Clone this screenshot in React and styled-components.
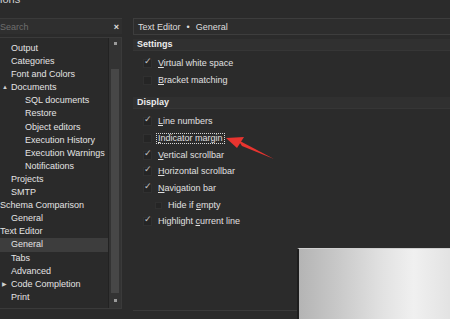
import React from "react";
import styled, { createGlobalStyle } from "styled-components";

const GlobalStyle = createGlobalStyle`
  html, body { margin: 0; padding: 0; background: #2b2b2b; }
  body { font-family: "Liberation Sans", Arial, sans-serif; }
`;

const Window = styled.div`
  position: relative;
  width: 450px;
  height: 319px;
  overflow: hidden;
  background: #2b2b2b;
  color: #dcdcdc;
  font-size: 9px;
`;

const TitleStrip = styled.div`
  height: 18px;
  overflow: hidden;
  color: #d0d0d0;
  font-size: 11px;
  line-height: 11px;
`;

const TitleText = styled.div`
  margin-top: -6px;
`;

const Main = styled.div`
  display: grid;
  grid-template-columns: 122px 1fr;
  column-gap: 11px;
  height: 291px;
`;

const LeftColumn = styled.div`
  display: flex;
  flex-direction: column;
  gap: 3px;
`;

const SearchBox = styled.div`
  height: 15px;
  display: flex;
  align-items: center;
  justify-content: space-between;
  border-top: 1px solid #3a3a3a;
  background: #2f2f2f;
  padding-right: 3px;
  color: #6e6e6e;
`;

const ClearGlyph = styled.span`
  color: #e0e0e0;
  font-size: 9px;
  font-weight: bold;
`;

const TreePanel = styled.div`
  height: 270px;
  display: flex;
  border-top: 1px solid #3a3a3a;
  border-bottom: 1px solid #3a3a3a;
  border-right: 1px solid #3a3a3a;
  background: #2a2a2a;
`;

const TreeList = styled.div`
  flex: 1;
  padding-top: 4px;
  border-right: 1px solid #222;
`;

const TreeRow = styled.div`
  position: relative;
  height: 13.1px;
  line-height: 13.1px;
  padding-left: ${(p) => p.$indent}px;
  white-space: nowrap;
  color: #e4e4e4;
  background: ${(p) => (p.$selected ? "#3d3d3d" : "transparent")};
`;

const Expander = styled.span`
  position: absolute;
  left: 2px;
  top: 0;
  font-size: 6px;
  color: #cfcfcf;
`;

const ScrollBar = styled.div`
  width: 12px;
  display: flex;
  flex-direction: column;
  align-items: center;
  background: #333333;
  padding: 4px 0 6px;
`;

const ScrollArrow = styled.div`
  width: 3px;
  height: 3px;
  background: #9a9a9a;
`;

const ScrollThumb = styled.div`
  width: 8px;
  flex: 1;
  margin: 24px 0 6px;
  background: #474747;
`;

const RightColumn = styled.div`
  display: flex;
  flex-direction: column;
`;

const Breadcrumb = styled.div`
  height: 15px;
  display: flex;
  align-items: center;
  gap: 6px;
  padding-left: 4px;
  border-top: 1px solid #3d3d3d;
  border-bottom: 1px solid #3d3d3d;
  border-left: 1px solid #3d3d3d;
  background: #2d2d2d;
  color: #dedede;
`;

const Content = styled.div`
  height: 271px;
  border-bottom: 1px solid #3a3a3a;
  padding-top: 4px;
`;

const SectionHeader = styled.div`
  height: 11px;
  line-height: 11px;
  padding-left: 4px;
  font-weight: bold;
  color: #ececec;
  background: #303030;
  border-bottom: 1px solid #363636;
  margin-bottom: 4px;
`;

const Section = styled.div`
  margin-bottom: ${(p) => p.$gap || 0}px;
`;

const OptionRow = styled.div`
  height: 16.7px;
  display: flex;
  align-items: center;
  gap: 4px;
  padding-left: ${(p) => (p.$nested ? 22 : 10)}px;
`;

const Box = styled.span`
  position: relative;
  width: ${(p) => (p.$small ? 5 : 7)}px;
  height: ${(p) => (p.$small ? 5 : 7)}px;
  background: #252525;
  border: 1px solid #303030;
  flex: none;
`;

const Tick = styled.span`
  position: absolute;
  left: 0px;
  top: -4px;
  font-size: 9px;
  color: #c4c4c4;
`;

const Label = styled.span`
  color: #e0e0e0;
  padding: 0 1px;
  border: 1px dotted ${(p) => (p.$focused ? "#d8d8d8" : "transparent")};
  line-height: 9px;
`;

const Key = styled.span`
  text-decoration: underline;
`;

const Watermark = styled.div`
  position: absolute;
  left: 297px;
  top: 248px;
  width: 153px;
  height: 71px;
  border-left: 2px solid #1e1e1e;
  border-top: 1px solid #d0d0d0;
  background: linear-gradient(90deg, #b4b4b4 0%, #c8c8c8 25%, #e2e2e2 55%, #f0f0f0 75%, #e2e2e2 100%);
`;

const ArrowLayer = styled.svg`
  position: absolute;
  left: 0;
  top: 0;
  pointer-events: none;
`;

const tree = [
  { t: "Output", i: 11 },
  { t: "Categories", i: 11 },
  { t: "Font and Colors", i: 11 },
  { t: "Documents", i: 11, exp: "▲" },
  { t: "SQL documents", i: 25 },
  { t: "Restore", i: 25 },
  { t: "Object editors", i: 25 },
  { t: "Execution History", i: 25 },
  { t: "Execution Warnings", i: 25 },
  { t: "Notifications", i: 25 },
  { t: "Projects", i: 11 },
  { t: "SMTP", i: 11 },
  { t: "Schema Comparison", i: 0 },
  { t: "General", i: 11 },
  { t: "Text Editor", i: 0 },
  { t: "General", i: 11, sel: true },
  { t: "Tabs", i: 11 },
  { t: "Advanced", i: 11 },
  { t: "Code Completion", i: 11, exp: "▶" },
  { t: "Print", i: 11 },
];

const Option = ({ checked, nested, focused, children }) => (
  <OptionRow $nested={nested}>
    <Box $small={nested}>{checked && <Tick>✓</Tick>}</Box>
    <Label $focused={focused}>{children}</Label>
  </OptionRow>
);

export default function App() {
  return (
    <Window>
      <GlobalStyle />
      <TitleStrip>
        <TitleText>ions</TitleText>
      </TitleStrip>
      <Main>
        <LeftColumn>
          <SearchBox>
            <span>Search</span>
            <ClearGlyph>×</ClearGlyph>
          </SearchBox>
          <TreePanel>
            <TreeList>
              {tree.map((n, k) => (
                <TreeRow key={k} $indent={n.i} $selected={n.sel}>
                  {n.exp && <Expander>{n.exp}</Expander>}
                  {n.t}
                </TreeRow>
              ))}
            </TreeList>
            <ScrollBar>
              <ScrollArrow />
              <ScrollThumb />
              <ScrollArrow />
            </ScrollBar>
          </TreePanel>
        </LeftColumn>
        <RightColumn>
          <Breadcrumb>
            <span>Text Editor</span>
            <span>•</span>
            <span>General</span>
          </Breadcrumb>
          <Content>
            <Section $gap={9}>
              <SectionHeader>Settings</SectionHeader>
              <Option checked>
                <Key>V</Key>irtual white space
              </Option>
              <Option>
                <Key>B</Key>racket matching
              </Option>
            </Section>
            <Section>
              <SectionHeader>Display</SectionHeader>
              <Option checked>
                <Key>L</Key>ine numbers
              </Option>
              <Option focused>
                <Key>I</Key>ndicator margin
              </Option>
              <Option checked>
                <Key>V</Key>ertical scrollbar
              </Option>
              <Option checked>
                <Key>H</Key>orizontal scrollbar
              </Option>
              <Option checked>
                <Key>N</Key>avigation bar
              </Option>
              <Option nested>
                Hide if <Key>e</Key>mpty
              </Option>
              <Option checked>
                Highlight <Key>c</Key>urrent line
              </Option>
            </Section>
          </Content>
        </RightColumn>
      </Main>
      <Watermark />
      <ArrowLayer width="450" height="319" viewBox="0 0 450 319">
        <polygon points="226,138 244,137 237,148" fill="#e8342f" />
        <polygon points="238,140 242,146 274,159" fill="#e8342f" />
      </ArrowLayer>
    </Window>
  );
}
